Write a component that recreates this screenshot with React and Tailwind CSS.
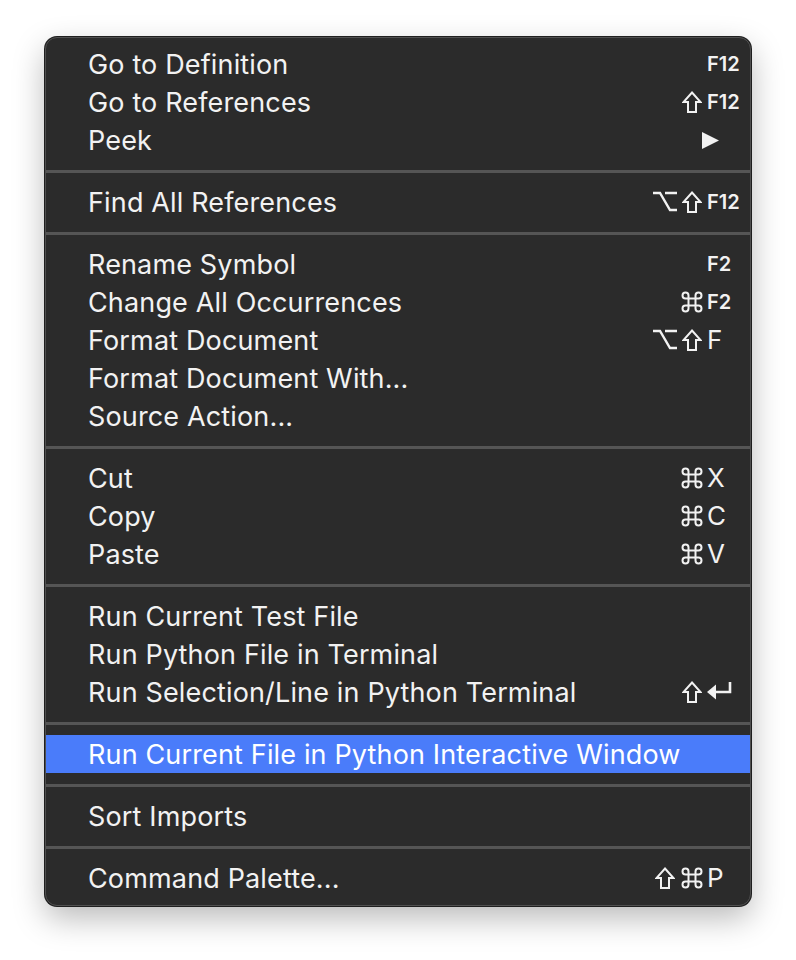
const FONT = { fontFamily: 'Inter, "Liberation Sans", sans-serif' };

function Shift() {
  return (
    <svg width="20" height="22" viewBox="0 0 20 22" fill="none" stroke="currentColor" strokeWidth="2" strokeLinejoin="miter">
      <path d="M10 1.5 L18.5 11 L14 11 L14 21 L6 21 L6 11 L1.5 11 Z" />
    </svg>
  );
}

function Option() {
  return (
    <svg width="24" height="21" viewBox="0 0 24 21" fill="none" stroke="currentColor" strokeWidth="2.4">
      <path d="M0 2 H7 L17 19 H24 M12 2 H24" />
    </svg>
  );
}

function Command() {
  return (
    <svg width="22" height="22" viewBox="0 0 22 22" fill="none" stroke="currentColor" strokeWidth="2">
      <path d="M7.5 7.5 H4.5 A3 3 0 1 1 7.5 4.5 V17.5 A3 3 0 1 1 4.5 14.5 H17.5 A3 3 0 1 1 14.5 17.5 V4.5 A3 3 0 1 1 17.5 7.5 H7.5" />
    </svg>
  );
}

function Return() {
  return (
    <svg width="26" height="19" viewBox="0 0 26 19" fill="currentColor">
      <path d="M23 1 V11 H7" fill="none" stroke="currentColor" strokeWidth="2.6" />
      <path d="M0 11 L9 3.5 L9 18.5 Z" />
    </svg>
  );
}

function Arrow() {
  return (
    <svg width="17" height="17" viewBox="0 0 17 17" fill="currentColor" className="-ml-[5px]">
      <path d="M0 0 L17 8.5 L0 17 Z" />
    </svg>
  );
}

const MODS = { shift: Shift, opt: Option, cmd: Command };

const GROUPS = [
  [
    { label: 'Go to Definition', key: 'F12', fkey: true },
    { label: 'Go to References', mods: ['shift'], key: 'F12', fkey: true },
    { label: 'Peek', arrow: true },
  ],
  [{ label: 'Find All References', mods: ['opt', 'shift'], key: 'F12', fkey: true }],
  [
    { label: 'Rename Symbol', key: 'F2', fkey: true },
    { label: 'Change All Occurrences', mods: ['cmd'], key: 'F2', fkey: true },
    { label: 'Format Document', mods: ['opt', 'shift'], key: 'F' },
    { label: 'Format Document With...' },
    { label: 'Source Action...' },
  ],
  [
    { label: 'Cut', mods: ['cmd'], key: 'X' },
    { label: 'Copy', mods: ['cmd'], key: 'C' },
    { label: 'Paste', mods: ['cmd'], key: 'V' },
  ],
  [
    { label: 'Run Current Test File' },
    { label: 'Run Python File in Terminal' },
    { label: 'Run Selection/Line in Python Terminal', mods: ['shift'], ret: true },
  ],
  [{ label: 'Run Current File in Python Interactive Window', active: true }],
  [{ label: 'Sort Imports' }],
  [{ label: 'Command Palette...', mods: ['shift', 'cmd'], key: 'P' }],
];

function Row({ item }) {
  return (
    <div
      className={
        'flex items-center h-[38px] pl-[42px] text-[27px] leading-none ' +
        (item.active ? 'bg-[#4a7cfa] text-white' : 'text-[#f2f2f2]')
      }
    >
      <span className="flex-1 whitespace-nowrap tracking-[0.15px]">{item.label}</span>
      <div className="flex justify-end">
        {(item.mods || []).map((m, i) => {
          const Icon = MODS[m];
          return (
            <span key={i} className="w-[27px] flex justify-center">
              <Icon />
            </span>
          );
        })}
      </div>
      <div className="w-[43px] ml-[2px] flex items-center">
        {item.key && (
          <span className={item.fkey ? 'text-[20px] font-semibold' : 'text-[26px]'}>{item.key}</span>
        )}
        {item.ret && (
          <span className="mb-[4px]">
            <Return />
          </span>
        )}
        {item.arrow && <Arrow />}
      </div>
    </div>
  );
}

export default function App() {
  return (
    <div className="min-h-[960px] w-[796px] bg-white pt-[37px] pl-[45px]" style={FONT}>
      <div className="w-[706px] rounded-[12px] border border-[#505050] bg-[#2b2b2b] pt-[7px] pb-[8px] shadow-[0_0_0_1px_#1f1f1f,0_12px_32px_rgba(0,0,0,0.28)] overflow-hidden">
        {GROUPS.map((group, gi) => (
          <div key={gi}>
            {gi > 0 && <div className="h-[3px] bg-[#555555] mt-[11px] mb-[10px]" />}
            {group.map((item, i) => (
              <Row key={i} item={item} />
            ))}
          </div>
        ))}
      </div>
    </div>
  );
}
